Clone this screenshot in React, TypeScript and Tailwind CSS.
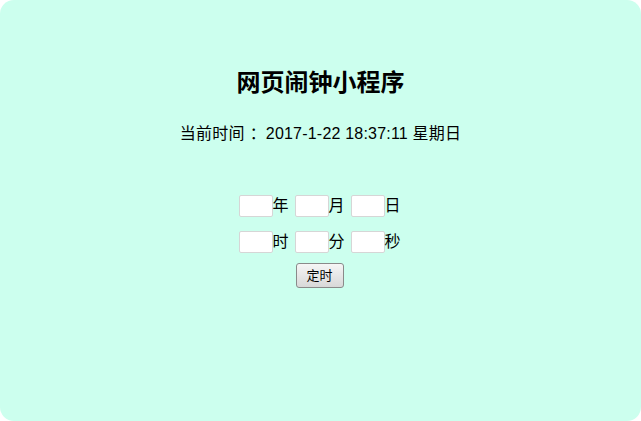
import { useState } from 'react';

const font = { fontFamily: '"Liberation Sans", "Noto Sans CJK SC", sans-serif' };

const Field = ({ label }: { label: string }) => {
  const [v, setV] = useState('');
  return (
    <span className="flex items-center">
      <input
        value={v}
        onChange={(e) => setV(e.target.value)}
        className="h-[22px] w-[34px] rounded-[2px] border border-[#d6d6d6] bg-white px-1 text-[14px] outline-none"
      />
      <span className="w-4 text-[16px] leading-[22px] text-black">{label}</span>
    </span>
  );
};

export default function App() {
  return (
    <div className="h-[421px] w-[641px] bg-white" style={font}>
      <div className="flex h-full w-full flex-col items-center rounded-[14px] bg-[#ccffee] pt-[69px]">
        <h1 className="text-[24px] font-bold leading-[28px] text-black">网页闹钟小程序</h1>
        <p className="mt-[27px] text-[16px] leading-[20px] tracking-[0.2px] text-black">
          当前时间<span className="ml-[5px]">：</span>2017-1-22 18:37:11 星期日
        </p>

        <div className="mt-[51px] ml-[-2px] flex flex-col items-center">
          <div className="flex gap-[6px]">
            <Field label="年" />
            <Field label="月" />
            <Field label="日" />
          </div>
          <div className="mt-[14px] flex gap-[6px]">
            <Field label="时" />
            <Field label="分" />
            <Field label="秒" />
          </div>
          <button className="mt-[10px] h-[25px] w-[48px] rounded-[3px] border border-[#8a8a8a] bg-gradient-to-b from-[#f6f6f6] to-[#d8d8d8] text-[13px] leading-[23px] text-black">
            定时
          </button>
        </div>
      </div>
    </div>
  );
}
